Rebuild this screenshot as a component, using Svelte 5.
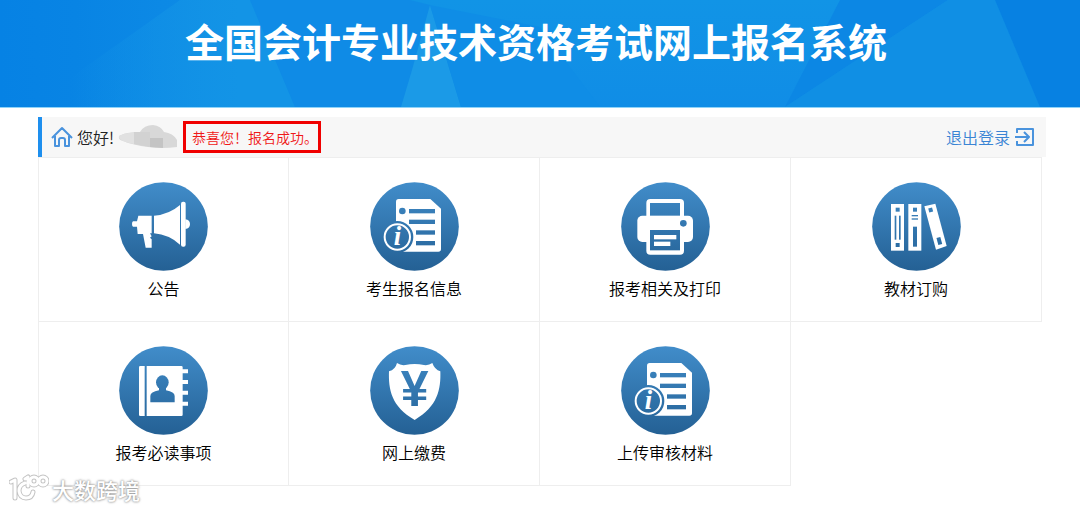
<script>
  // Registration home: banner, greeting bar and the grid of entry tiles.
  const tiles = [
    { icon: 'horn', label: '公告' },
    { icon: 'info', label: '考生报名信息' },
    { icon: 'printer', label: '报考相关及打印' },
    { icon: 'books', label: '教材订购' },
    { icon: 'contacts', label: '报考必读事项' },
    { icon: 'shield', label: '网上缴费' },
    { icon: 'info', label: '上传审核材料' },
  ];
</script>

<header class="banner">
  <svg class="facets" viewBox="0 0 1080 107" preserveAspectRatio="none" aria-hidden="true">
    <defs>
      <linearGradient id="edge" gradientUnits="userSpaceOnUse" x1="0" x2="250" y1="0" y2="0">
        <stop offset="0" stop-color="#0682e4" />
        <stop offset=".3" stop-color="#0884e4" />
        <stop offset="1" stop-color="#108ee6" />
      </linearGradient>
      <linearGradient id="glow" gradientUnits="userSpaceOnUse" x1="70" x2="240" y1="0" y2="0">
        <stop offset="0" stop-color="#1394e6" stop-opacity="0" />
        <stop offset="1" stop-color="#1394e6" />
      </linearGradient>
      <linearGradient id="mid" x1="0" x2="0" y1="0" y2="1">
        <stop offset="0" stop-color="#1194e6" />
        <stop offset="1" stop-color="#108de6" />
      </linearGradient>
    </defs>
    <rect width="1080" height="107" fill="url(#mid)" />
    <path d="M0 0H250L295 107H0Z" fill="url(#edge)" />
    <path d="M180 0H250L295 107H70V78Z" fill="url(#glow)" />
    <path d="M250 0H410L430 5L461 107H295Z" fill="#0f8be6" />
    <path d="M430 5L461 107H401L412 70Z" fill="#1b9ae7" />
    <path d="M430 5L540 27L600 107H461Z" fill="#0f8de6" />
    <path d="M840 0H948L785 107Z" fill="#0c87e4" />
    <path d="M948 0H995L1040 107H785Z" fill="#108fe4" />
    <path d="M995 0H1080V107H1040Z" fill="#0781e2" />
  </svg>
  <h1>全国会计专业技术资格考试网上报名系统</h1>
</header>

<main>
  <div class="bar">
    <svg class="home" viewBox="0 0 22 22" aria-hidden="true">
      <path d="M1 12L11 2L21 12M4 10V20H8V14Q8 12 10 12H12Q14 12 14 14V20H18V10" />
    </svg>
    <span class="hello">您好!</span>
    <svg class="mask" viewBox="0 0 60 28" aria-hidden="true">
      <path d="M1 13Q8 9 22 9Q26 2 35 2Q43 3 46 9Q55 10 59 17V24Q44 26 30 24Q15 22 5 18Q0 17 1 13Z" fill="#d8d8d8" />
      <path d="M1 13Q8 9 16 10V21Q0 18 1 13Z" fill="#e1e1e1" />
      <path d="M16 9H32V24L16 21Z" fill="#d2d2d2" />
      <path d="M32 15H45V25L32 24Z" fill="#c4c4c4" />
    </svg>
    <strong class="notice">恭喜您！报名成功。</strong>
    <a class="logout" href="#logout">
      退出登录
      <svg viewBox="0 0 20 20" aria-hidden="true">
        <path d="M2 6V2H18V18H2V14M0 10H13M9 5L14 10L9 15" />
      </svg>
    </a>
  </div>

  <nav class="grid">
    {#each tiles as tile}
      <a class="tile" href="#{tile.icon}">
        <svg class="icon" viewBox="0 0 267 267" aria-hidden="true">
          <defs>
            <linearGradient id="disc" gradientUnits="userSpaceOnUse" x1="0" y1="0" x2="0" y2="267">
              <stop offset="0" stop-color="#418dca" />
              <stop offset="1" stop-color="#246094" />
            </linearGradient>
          </defs>
          <circle cx="133.5" cy="133.5" r="133" fill="url(#disc)" />
          {#if tile.icon === 'horn'}
            <g class="white">
              <path d="M42 118H54L58 101H98V154H93L98 163L93 167L98 172V197H80L72 156H56L54 134H42Q39 132 39 126Q39 120 42 118Z" />
              <path d="M105 101Q150 98 183 69V188Q150 158 105 154Z" />
              <rect x="186" y="59" width="14" height="135" rx="6" />
              <path d="M199 112Q213 114 213 126Q213 139 199 141Z" />
            </g>
          {:else if tile.icon === 'info'}
            <path class="white" d="M86 51H181L213 80V201Q213 209 205 209H78V59Q78 51 86 51Z" />
            <g class="disc">
              <circle cx="97" cy="87" r="10" />
              <rect x="117" y="81" width="78" height="13" />
              <rect x="117" y="113" width="78" height="13" />
              <rect x="138" y="145" width="57" height="13" />
              <rect x="138" y="177" width="57" height="13" />
              <circle cx="82" cy="165" r="48" />
            </g>
            <circle class="ring" cx="82" cy="165" r="38" />
            <text class="white serif" x="82" y="190" font-size="80">i</text>
          {:else if tile.icon === 'printer'}
            <g class="white">
              <rect x="76" y="51" width="113" height="90" rx="12" />
              <rect x="49" y="101" width="167" height="79" rx="15" />
              <rect x="76" y="130" width="113" height="88" rx="12" />
            </g>
            <g class="disc">
              <rect x="87" y="63" width="90" height="38" />
              <circle cx="187" cy="124" r="10" />
              <rect x="87" y="144" width="90" height="61" />
            </g>
            <g class="white">
              <rect x="99" y="159" width="67" height="13" />
              <rect x="99" y="179" width="49" height="13" />
            </g>
          {:else if tile.icon === 'books'}
            <g class="white">
              <rect x="57" y="66" width="39" height="140" />
              <rect x="109" y="66" width="39" height="140" />
              <path d="M157 73L190 65L224 192L192 203Z" />
            </g>
            <g class="disc">
              <rect x="71" y="77" width="12" height="12" />
              <rect x="68" y="101" width="5" height="72" />
              <rect x="81" y="101" width="5" height="72" />
              <rect x="71" y="183" width="12" height="12" />
              <rect x="123" y="77" width="12" height="12" />
              <rect x="119" y="99" width="19" height="4" />
              <rect x="119" y="109" width="19" height="4" />
              <rect x="123" y="134" width="12" height="60" />
              <rect x="170" y="78" width="12" height="12" transform="rotate(-15 176 84)" />
              <rect x="196" y="166" width="12" height="22" transform="rotate(-15 202 177)" />
            </g>
          {:else if tile.icon === 'contacts'}
            <g class="white">
              <path d="M64 60H77V210H64Q60 210 60 206V64Q60 60 64 60Z" />
              <path d="M83 60H187Q191 60 191 64V70H207V82H191V102H207V114H191V134H207V146H191V167H207V179H191V206Q191 210 187 210H83Z" />
            </g>
            <g class="disc">
              <ellipse cx="130" cy="109" rx="19" ry="21" />
              <path d="M120 124H141V133Q167 138 167 150V169H94V150Q94 138 120 133Z" />
            </g>
          {:else}
            <path class="white" d="M81 51Q92 59 106 57Q134 51 162 57Q176 59 187 51Q194 71 211 76C213 130 203 182 134 222C64 182 55 130 57 76Q76 71 81 51Z" />
            <text class="disc yen" x="134" y="181" font-size="150">¥</text>
          {/if}
        </svg>
        <span>{tile.label}</span>
      </a>
    {/each}
  </nav>
</main>

<div class="watermark">
  <svg viewBox="0 0 40 30" aria-hidden="true">
    {#each ['shade', 'line'] as layer}
      <g class={layer}>
        <path d="M2 8L6 6V24M16 9Q10 11 10 17Q11 24 17 24Q23 24 24 18M16 5L19 3V12" />
        <circle cx="25" cy="7" r="4" />
        <circle cx="34" cy="7" r="4" />
      </g>
    {/each}
  </svg>
  <span>大数跨境</span>
</div>

<style>
  :global(body) { margin: 0; background: #fff; font-family: "Noto Sans CJK SC", sans-serif; color: #222; }
  a { color: inherit; text-decoration: none; }

  .banner { position: relative; height: 108px; border-bottom: 1px solid #8fd3f8; box-sizing: border-box; }
  .facets { position: absolute; inset: 0; width: 100%; height: 100%; }
  h1 { position: relative; margin: 0; padding: 12px 8px 0 0; text-align: center; color: #fff;
    font-size: 39px; line-height: 56px; font-weight: 700; white-space: nowrap; }

  main { padding: 9px 34px 0 38px; font-weight: 350; }
  .bar { display: flex; align-items: center; height: 40px; box-sizing: border-box; padding: 0 11px 0 9px;
    border-left: 4px solid #1e8fee; background: #f7f7f7; font-size: 16px; }
  .home { width: 22px; height: 22px; margin-right: 4px; }
  .home path, .logout path { fill: none; stroke: #4a93dd; stroke-width: 2; stroke-linejoin: round; }
  .hello { width: 41px; }
  .mask { width: 60px; height: 28px; }
  .notice { margin-left: 5px; padding-left: 6px; border: 3px solid #f00000; color: #f01818;
    font-size: 14px; line-height: 26px; font-weight: 350; white-space: nowrap; }
  .logout { display: flex; align-items: center; gap: 5px; margin-left: auto; color: #3a84d4; }
  .logout svg { width: 20px; height: 20px; }

  .grid { display: grid; grid-template-columns: repeat(4, 1fr); margin-right: 4px; border-top: 1px solid #eee; }
  .tile { display: flex; flex-direction: column; align-items: center; gap: 5px; padding: 24px 0 21px;
    border-right: 1px solid #eee; border-bottom: 1px solid #eee; font-size: 16px; line-height: 24px; color: #000; }
  .tile:nth-child(4n + 1) { border-left: 1px solid #eee; }
  .icon { width: 89px; height: 89px; }
  .white { fill: #fff; }
  .disc { fill: url(#disc); }
  .ring { fill: none; stroke: #fff; stroke-width: 6; }
  .serif { font-family: "Liberation Serif", serif; font-weight: 700; font-style: italic; text-anchor: middle; }
  .yen { font-family: "Liberation Sans", sans-serif; font-weight: 700; text-anchor: middle; }

  .watermark { position: absolute; left: 9px; bottom: 6px; display: flex; align-items: center; gap: 3px;
    color: #fff; font-size: 22px; line-height: 30px; font-weight: 500;
    text-shadow: 0 0 2px #888, 0 0 3px #aaa; }
  .watermark svg { width: 40px; height: 30px; }
  .shade, .line { fill: none; stroke-linecap: round; stroke-linejoin: round; }
  .shade { stroke: #c4c4c4; stroke-width: 5; }
  .line { stroke: #fff; stroke-width: 3; }
</style>
